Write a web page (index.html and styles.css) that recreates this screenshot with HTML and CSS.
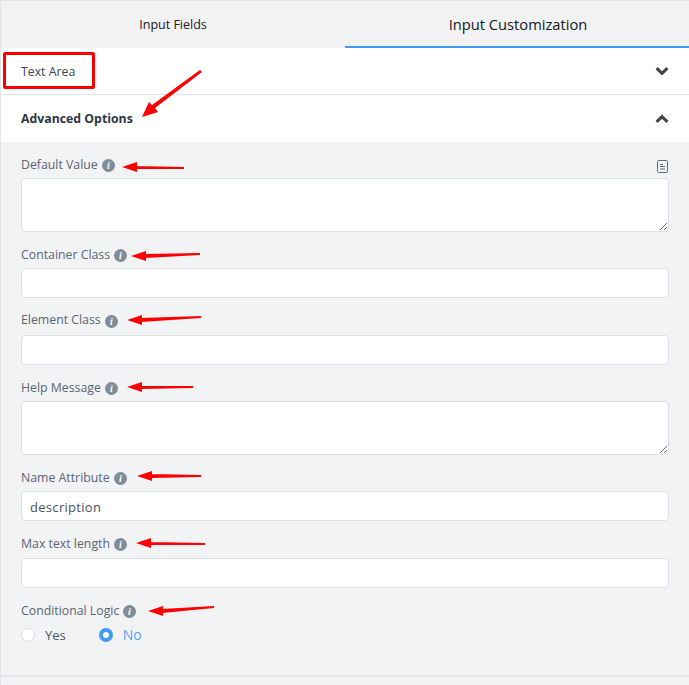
FILE: index.html
```html
<!DOCTYPE html>
<html lang="en">
<head>
<meta charset="utf-8">
<title>Input Customization</title>
<link rel="stylesheet" href="styles.css">
</head>
<body>
<div class="panel">
  <div class="tabs">
    <div class="tab">Input Fields</div>
    <div class="tab active">Input Customization</div>
  </div>
  <div class="row row-basic">
    <span class="row-title">Text Area</span>
    <svg class="chev" viewBox="0 0 14 10"><path d="M1.6 2.2 7 7.4l5.4-5.2" /></svg>
  </div>
  <div class="row row-adv">
    <span class="row-title strong">Advanced Options</span>
    <svg class="chev" viewBox="0 0 14 10"><path d="M1.6 7.8 7 2.6l5.4 5.2" /></svg>
  </div>
  <div class="body">
    <div class="field f1">
      <div class="label-line">
        <label>Default Value</label>
        <svg class="info" viewBox="0 0 13 13"><circle cx="6.5" cy="6.5" r="6.5"/><text x="6.5" y="10.2" class="info-i">i</text></svg>
        <svg class="doc" viewBox="0 0 13 13"><rect x="1.5" y="0.5" width="10" height="12" rx="1"/><path d="M4 4.5h3M4 6.5h5M4 9h5"/></svg>
      </div>
      <textarea class="box area"></textarea>
    </div>
    <div class="field f2">
      <div class="label-line"><label>Container Class</label><svg class="info" viewBox="0 0 13 13"><circle cx="6.5" cy="6.5" r="6.5"/><text x="6.5" y="10.2" class="info-i">i</text></svg></div>
      <input class="box line" type="text">
    </div>
    <div class="field f3">
      <div class="label-line"><label>Element Class</label><svg class="info" viewBox="0 0 13 13"><circle cx="6.5" cy="6.5" r="6.5"/><text x="6.5" y="10.2" class="info-i">i</text></svg></div>
      <input class="box line" type="text">
    </div>
    <div class="field f4">
      <div class="label-line"><label>Help Message</label><svg class="info" viewBox="0 0 13 13"><circle cx="6.5" cy="6.5" r="6.5"/><text x="6.5" y="10.2" class="info-i">i</text></svg></div>
      <textarea class="box area"></textarea>
    </div>
    <div class="field f5">
      <div class="label-line"><label>Name Attribute</label><svg class="info" viewBox="0 0 13 13"><circle cx="6.5" cy="6.5" r="6.5"/><text x="6.5" y="10.2" class="info-i">i</text></svg></div>
      <input class="box line" type="text" value="description">
    </div>
    <div class="field f6">
      <div class="label-line"><label>Max text length</label><svg class="info" viewBox="0 0 13 13"><circle cx="6.5" cy="6.5" r="6.5"/><text x="6.5" y="10.2" class="info-i">i</text></svg></div>
      <input class="box line" type="text">
    </div>
    <div class="field f7">
      <div class="label-line"><label>Conditional Logic</label><svg class="info" viewBox="0 0 13 13"><circle cx="6.5" cy="6.5" r="6.5"/><text x="6.5" y="10.2" class="info-i">i</text></svg></div>
      <div class="radios">
        <span class="radio"><span class="dot"></span>Yes</span>
        <span class="radio on"><span class="dot"></span>No</span>
      </div>
    </div>
  </div>
  <div class="foot"></div>
</div>
<div class="mark"></div>
<svg class="arrows" viewBox="0 0 689 685">
  <path d="M142 117 L158 112 L155 108 L202 72 L200 70 L152 105 L149 102 Z"/>
  <path d="M122 167 L137 162 L137 172 Z M136 166 L184 167 L184 169 L136 169 Z"/>
  <path d="M131 256 L146 251 L146 261 Z M145 254 L200 253 L200 255 L145 258 Z"/>
  <path d="M127 320 L142 315 L142 325 Z M141 318 L201 316 L201 318 L141 322 Z"/>
  <path d="M127 387 L142 382 L142 392 Z M141 386 L193 386 L193 388 L141 389 Z"/>
  <path d="M137 476 L152 471 L152 481 Z M151 474 L201 475 L201 477 L151 478 Z"/>
  <path d="M136 543 L151 538 L151 548 Z M150 542 L205 543 L205 545 L150 545 Z"/>
  <path d="M148 611 L163 606 L163 616 Z M162 609 L214 606 L214 608 L162 613 Z"/>
</svg>
</body>
</html>
```

FILE: styles.css
```css
* { box-sizing: border-box; }
html, body { margin: 0; padding: 0; }
body {
  width: 689px;
  height: 685px;
  overflow: hidden;
  position: relative;
  background: #f2f3f5;
  font-family: "Open Sans", "Noto Sans", sans-serif;
  color: #3d4451;
}
.panel {
  border-top: 1px solid #e2e4e8;
  border-left: 1px solid #e2e4e8;
  height: 685px;
  display: flex;
  flex-direction: column;
}
.tabs { display: flex; height: 47px; background: #f2f2f3; }
.tab {
  width: 344px;
  display: flex;
  align-items: center;
  justify-content: center;
  font-size: 12.5px;
  color: #16202e;
}
.tab.active {
  font-size: 14.7px;
  border-bottom: 2px solid #3f9cf5;
  padding: 1px 0 0 2px;
  color: #111a26;
}
.row {
  height: 47px;
  background: #fff;
  display: flex;
  align-items: center;
  justify-content: space-between;
  padding: 0 20px;
}
.row-basic { border-bottom: 1px solid #e2e4e8; }
.row-title { font-size: 12.3px; color: #3d4451; }
.row-title.strong { font-weight: 700; color: #2f3642; }
.chev { width: 14px; height: 10px; fill: none; stroke: #3b4350; stroke-width: 3; }
.body { padding: 0 20px; flex: 1; }
.field { display: flex; flex-direction: column; }
.f1, .f2, .f4, .f5, .f6, .f7 { padding-top: 14px; }
.f3 { padding-top: 13px; }
.label-line {
  display: flex;
  align-items: center;
  height: 18px;
  margin-bottom: 4px;
  font-size: 12.3px;
  color: #5b6472;
}
.label-line label { margin-bottom: 2px; }
.f3 .label-line { margin-bottom: 6px; }
.f6 .label-line { margin-bottom: 5px; }
.info { width: 13px; height: 13px; margin-left: 4px; fill: #7f8c99; flex: none; }
.f3 .info { margin-top: 2px; }
.info-i { fill: #fff; font: italic 700 10px "Liberation Serif", serif; text-anchor: middle; }
.doc {
  width: 13px;
  height: 13px;
  margin-left: auto;
  margin-top: 3px;
  fill: none;
  stroke: #606a78;
  stroke-width: 1;
}
.box {
  display: block;
  width: 648px;
  background: #fff;
  border: 1px solid #dcdfe4;
  border-radius: 4px;
  margin: 0;
  font-family: inherit;
  font-size: 13px;
  color: #4a5260;
  padding: 0 8px;
  outline: none;
}
.area { height: 54px; resize: vertical; }
.line { height: 30px; padding-top: 1px; letter-spacing: 0.3px; }
.radios { display: flex; gap: 33px; padding-top: 1px; }
.radio { display: flex; align-items: center; gap: 10px; font-size: 13px; font-weight: 500; color: #4f5865; }
.radio.on { color: #5a9ef5; font-size: 14px; }
.dot {
  width: 14px;
  height: 14px;
  border-radius: 50%;
  background: #fff;
  border: 1px solid #d9dce2;
}
.radio.on .dot { background: #fff; border: 4.5px solid #3f9cf5; }
.foot { height: 10px; border-top: 2px solid #e2e4e8; }
.mark {
  position: absolute;
  left: 3px;
  top: 52px;
  width: 92px;
  height: 37px;
  border: 3px solid #f00;
  border-radius: 2px;
}
.arrows {
  position: absolute;
  left: 0;
  top: 0;
  width: 689px;
  height: 685px;
  fill: #f00;
  pointer-events: none;
}
```
